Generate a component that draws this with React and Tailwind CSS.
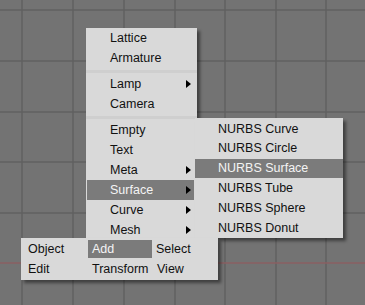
import React from 'react'

const font = { fontFamily: '"Liberation Sans", Arial, sans-serif' }

const addItems = [
  { label: 'Lattice' },
  { label: 'Armature' },
  { sep: true },
  { label: 'Lamp', sub: true },
  { label: 'Camera' },
  { sep: true },
  { label: 'Empty' },
  { label: 'Text' },
  { label: 'Meta', sub: true },
  { label: 'Surface', sub: true, active: true },
  { label: 'Curve', sub: true },
  { label: 'Mesh', sub: true },
]

const surfaceItems = ['NURBS Curve', 'NURBS Circle', 'NURBS Surface', 'NURBS Tube', 'NURBS Sphere', 'NURBS Donut']

function Arrow() {
  return (
    <svg width="5" height="8" viewBox="0 0 5 8" className="shrink-0">
      <path d="M0 0 L5 4 L0 8 Z" fill="#000" />
    </svg>
  )
}

function Grid() {
  const xs = [22, 73, 124, 175, 225, 276, 326]
  const ys = [10, 61, 112, 162, 213, 314]
  return (
    <svg width="365" height="305" className="absolute inset-0">
      {xs.map((x) => (
        <line key={'x' + x} x1={x} y1="0" x2={x} y2="305" stroke="#616161" strokeWidth="1.5" />
      ))}
      {ys.map((y) => (
        <line key={'y' + y} x1="0" y1={y} x2="365" y2={y} stroke="#616161" strokeWidth="1.5" />
      ))}
      <line x1="0" y1="263" x2="365" y2="263" stroke="#8a5f62" strokeWidth="1.5" />
    </svg>
  )
}

export default function App() {
  return (
    <div className="relative w-[365px] h-[305px] overflow-hidden bg-[#737373] text-[12.5px] text-[#111]" style={font}>
      <Grid />

      {/* Add menu */}
      <div className="absolute left-[86px] top-[28px] w-[111px] h-[212px] bg-[#d9d9d9] shadow-[3px_3px_3px_rgba(0,0,0,0.45)] flex flex-col">
        {addItems.map((it, i) =>
          it.sep ? (
            <div key={i} className="h-[6px] flex items-center">
              <div className="w-full h-[3px] bg-[#cfcfcf]" />
            </div>
          ) : (
            <div
              key={i}
              className={
                it.active
                  ? 'h-[20px] ml-[1px] mr-[3px] pl-[23px] pr-[3px] flex items-center justify-between bg-[#7b7b7b] text-[#f4f4f4]'
                  : 'h-[20px] pl-[24px] pr-[6px] flex items-center justify-between'
              }
            >
              <span>{it.label}</span>
              {it.sub && <Arrow />}
            </div>
          )
        )}
      </div>

      {/* Surface submenu */}
      <div className="absolute left-[195px] top-[118px] w-[148px] h-[120px] pt-[1px] bg-[#d9d9d9] shadow-[3px_3px_3px_rgba(0,0,0,0.45)] flex flex-col">
        {surfaceItems.map((s) => (
          <div
            key={s}
            className={
              s === 'NURBS Surface'
                ? 'h-[20px] pl-[23px] flex items-center bg-[#7b7b7b] text-[#f4f4f4]'
                : 'h-[20px] pl-[23px] flex items-center'
            }
          >
            {s}
          </div>
        ))}
      </div>

      {/* Header menu bar */}
      <div className="absolute left-[21px] top-[238px] w-[197px] h-[42px] pt-[1px] bg-[#d9d9d9] shadow-[3px_3px_3px_rgba(0,0,0,0.45)] grid grid-cols-[67px_64px_66px] grid-rows-[20px_20px]">
        <div className="pl-[7px] flex items-center">Object</div>
        <div className="my-[1px] pl-[4px] flex items-center bg-[#7b7b7b] text-[#f4f4f4]">Add</div>
        <div className="pl-[4px] flex items-center">Select</div>
        <div className="pl-[7px] flex items-center">Edit</div>
        <div className="pl-[4px] flex items-center">Transform</div>
        <div className="pl-[5px] flex items-center">View</div>
      </div>
    </div>
  )
}
